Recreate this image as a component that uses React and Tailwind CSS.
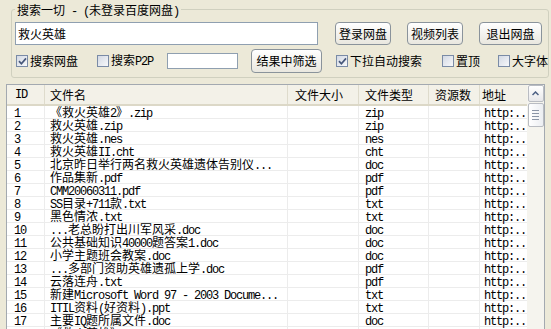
import React from "react";

const T = ({ s }) =>
  s
    .split(/([\x00-\x7f]+)/)
    .filter(Boolean)
    .map((p, i) =>
      /[\x00-\x7f]/.test(p[0]) ? (
        <span
          key={i}
          className="font-['Liberation_Mono',monospace] text-[12px] tracking-[-1.2px] whitespace-pre"
        >
          {p}
        </span>
      ) : (
        <span key={i}>{p}</span>
      )
    );

const CB = ({ checked }) => (
  <span className="w-[12px] h-[12px] border border-[#7a8ba6] bg-linear-to-br from-[#d3d9e4] to-[#f7f8fa] flex items-center justify-center shrink-0">
    {checked && (
      <svg width="9" height="9" viewBox="0 0 9 9">
        <path d="M1 4.2 L3.4 6.8 L8 1.4" stroke="#46577a" strokeWidth="1.7" fill="none" />
      </svg>
    )}
  </span>
);

const Btn = ({ children, w, h = "h-[23px]" }) => (
  <div
    className={`flex items-center justify-center whitespace-nowrap ${w} ${h} rounded-[4px] border border-[#8a939b] bg-linear-to-b from-white to-[#e9e7df] shrink-0`}
  >
    {children}
  </div>
);

const rows = [
  ["1", "《救火英雄2》.zip", "zip"],
  ["2", "救火英雄.zip", "zip"],
  ["3", "救火英雄.nes", "nes"],
  ["4", "救火英雄II.cht", "cht"],
  ["5", "北京昨日举行两名救火英雄遗体告别仪...", "doc"],
  ["6", "作品集新.pdf", "pdf"],
  ["7", "CMM20060311.pdf", "pdf"],
  ["8", "SS目录+711款.txt", "txt"],
  ["9", "黑色情浓.txt", "txt"],
  ["10", "...老总盼打出川军风采.doc", "doc"],
  ["11", "公共基础知识40000题答案1.doc", "doc"],
  ["12", "小学主题班会教案.doc", "doc"],
  ["13", "...多部门资助英雄遗孤上学.doc", "pdf"],
  ["14", "云落连舟.txt", "pdf"],
  ["15", "新建Microsoft Word 97 - 2003 Docume...", "txt"],
  ["16", "ITIL资料(好资料).ppt", "txt"],
  ["17", "主要IQ题所属文件.doc", "doc"],
  ["18", "《救火英雄》.rar", "rar"],
];

const cell = "h-[13px] leading-[12px] border-b border-r border-[#ececec] overflow-x-clip whitespace-nowrap";
const hcell = "h-full flex items-center border-r border-[#dedbcc] overflow-x-clip whitespace-nowrap";

const Check = ({ checked, label, ml }) => (
  <div className={`${ml} flex items-center shrink-0 whitespace-nowrap`}>
    <CB checked={checked} />
    <span className="ml-[2px]">
      <T s={label} />
    </span>
  </div>
);

export default function App() {
  return (
    <div className="w-[551px] h-[329px] bg-[#ECE9D8] overflow-hidden font-['Noto_Sans_CJK_SC',sans-serif] text-[12px] text-black leading-none">
      <div className="pt-[9px] pl-[11px] pr-[2px]">
        <div className="relative h-[69px] border border-[#D0D0BF] rounded-[3px] pt-[12px] pl-[3px]">
          <div className="absolute left-[3px] -top-[8px] px-[2px] bg-[#ECE9D8] leading-[15px] whitespace-nowrap">
            <T s="搜索一切 - (未登录百度网盘)" />
          </div>
          <div className="flex items-center h-[23px]">
            <div className="w-[303px] h-[23px] shrink-0 bg-white border border-[#8f9fb0] flex items-center pl-[2px] text-[12px]">
              救火英雄
            </div>
            <div className="ml-[17px] shrink-0">
              <Btn w="w-[56px]">登录网盘</Btn>
            </div>
            <div className="ml-[16px] shrink-0">
              <Btn w="w-[56px]">视频列表</Btn>
            </div>
            <div className="ml-[16px] shrink-0">
              <Btn w="w-[63px]">退出网盘</Btn>
            </div>
          </div>
          <div className="flex items-center h-[24px] mt-[4px]">
            <Check checked label="搜索网盘" ml="ml-[1px]" />
            <Check label="搜索P2P" ml="ml-[19px]" />
            <div className="ml-[14px] w-[71px] h-[16px] shrink-0 bg-white border border-[#8f9fb0]" />
            <div className="ml-[13px] shrink-0">
              <Btn w="w-[71px]" h="h-[24px]">结果中筛选</Btn>
            </div>
            <Check checked label="下拉自动搜索" ml="ml-[14px]" />
            <Check label="置顶" ml="ml-[20px]" />
            <Check label="大字体" ml="ml-[18px]" />
          </div>
        </div>
      </div>

      <div className="mt-[6px] ml-[6px] w-[539px] h-[260px] border border-[#a3a9b0] bg-white flex overflow-hidden">
        <div className="w-[520px] shrink-0">
          <div className="h-[21px] grid grid-cols-[38px_243px_71px_70px_51px_47px] bg-[#F3F1E8] border-b-[2px] border-[#dcd8c7]">
            <div className={`${hcell} pl-[8px]`}>
              <T s="ID" />
            </div>
            <div className={`${hcell} pl-[5px]`}>文件名</div>
            <div className={`${hcell} pl-[7px]`}>文件大小</div>
            <div className={`${hcell} pl-[6px]`}>文件类型</div>
            <div className={`${hcell} pl-[6px]`}>资源数</div>
            <div className={`${hcell} pl-[2px] border-r-0`}>地址</div>
          </div>
          {rows.map(([id, name, type]) => (
            <div key={id} className="grid grid-cols-[38px_243px_71px_70px_51px_47px]">
              <div className={`${cell} pl-[7px]`}>
                <T s={id} />
              </div>
              <div className={`${cell} pl-[5px]`}>
                <T s={name} />
              </div>
              <div className={cell} />
              <div className={`${cell} pl-[6px]`}>
                <T s={type} />
              </div>
              <div className={cell} />
              <div className={`${cell} pl-[4px] border-r-0`}>
                <T s="http:.." />
              </div>
            </div>
          ))}
        </div>
        <div className="w-[17px] shrink-0 bg-[#F5F4EE] flex flex-col items-center">
          <div className="w-[16px] h-[17px] border border-[#b9bcc2] rounded-[2px] bg-linear-to-b from-white to-[#e8e8ea] flex items-center justify-center">
            <svg width="7" height="5" viewBox="0 0 7 5">
              <path d="M0.5 4 L3.5 1 L6.5 4" stroke="#4d6185" strokeWidth="1.5" fill="none" />
            </svg>
          </div>
          <div className="mt-[1px] w-[16px] h-[24px] border border-[#b9bcc2] rounded-[2px] bg-linear-to-r from-white to-[#eceef2] flex flex-col items-center justify-center gap-[2px]">
            <div className="w-[7px] h-[1px] bg-[#8a94a6]" />
            <div className="w-[7px] h-[1px] bg-[#8a94a6]" />
            <div className="w-[7px] h-[1px] bg-[#8a94a6]" />
            <div className="w-[7px] h-[1px] bg-[#8a94a6]" />
          </div>
        </div>
      </div>
    </div>
  );
}
